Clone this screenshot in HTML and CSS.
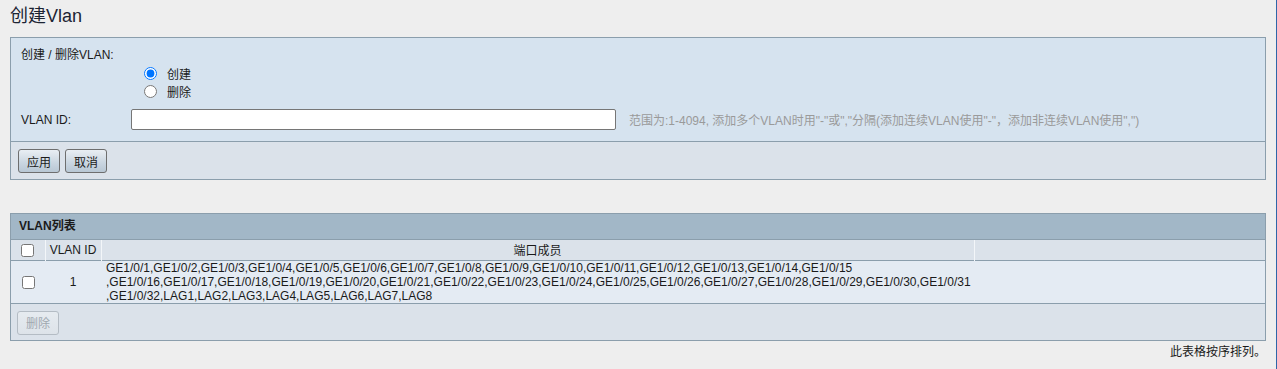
FILE: index.html
```html
<!DOCTYPE html>
<html lang="zh-CN">
<head>
<meta charset="utf-8">
<title>创建Vlan</title>
<link rel="stylesheet" href="styles.css">
</head>
<body>
<div class="page">
  <h1 class="title">创建Vlan</h1>

  <div class="panel">
    <div class="form">
      <div class="label-row">创建 / 删除VLAN:</div>
      <div class="radios">
        <label class="radio"><input type="radio" name="op" checked><span>创建</span></label>
        <label class="radio"><input type="radio" name="op"><span>删除</span></label>
      </div>
      <div class="id-row">
        <span class="id-label">VLAN ID:</span>
        <input class="id-input" type="text">
        <span class="hint">范围为:1-4094, 添加多个VLAN时用"-"或","分隔(添加连续VLAN使用"-"，添加非连续VLAN使用",")</span>
      </div>
    </div>
    <div class="footer">
      <button class="btn">应用</button>
      <button class="btn">取消</button>
    </div>
  </div>

  <div class="panel list">
    <div class="list-head">VLAN列表</div>
    <table class="grid">
      <colgroup>
        <col class="w-chk">
        <col class="w-id">
        <col class="w-mem">
        <col>
      </colgroup>
      <thead>
        <tr class="col-head">
          <th class="c-chk"><input type="checkbox"></th>
          <th class="c-id">VLAN ID</th>
          <th class="c-mem">端口成员</th>
          <th class="c-rest"></th>
        </tr>
      </thead>
      <tbody>
        <tr class="data">
          <td class="c-chk"><input type="checkbox"></td>
          <td class="c-id">1</td>
          <td class="c-mem mem">GE1/0/1,GE1/0/2,GE1/0/3,GE1/0/4,GE1/0/5,GE1/0/6,GE1/0/7,GE1/0/8,GE1/0/9,GE1/0/10,GE1/0/11,GE1/0/12,GE1/0/13,GE1/0/14,GE1/0/15<br>,GE1/0/16,GE1/0/17,GE1/0/18,GE1/0/19,GE1/0/20,GE1/0/21,GE1/0/22,GE1/0/23,GE1/0/24,GE1/0/25,GE1/0/26,GE1/0/27,GE1/0/28,GE1/0/29,GE1/0/30,GE1/0/31<br>,GE1/0/32,LAG1,LAG2,LAG3,LAG4,LAG5,LAG6,LAG7,LAG8</td>
          <td class="c-rest"></td>
        </tr>
      </tbody>
    </table>
    <div class="footer list-foot">
      <button class="btn" disabled>删除</button>
    </div>
  </div>

  <div class="note">此表格按序排列。</div>
</div>
</body>
</html>
```

FILE: styles.css
```css
html, body {
  margin: 0;
  padding: 0;
}
body {
  background: #eeeeee;
  font-family: "Liberation Sans", Arial, "Noto Sans CJK SC", sans-serif;
  font-size: 12px;
  color: #1a1a1a;
  min-height: 100vh;
  box-sizing: border-box;
  border-right: 1px solid #2f66a8;
}
.page {
  padding: 0 10px;
}
.title {
  margin: 0;
  padding-top: 5px;
  height: 32px;
  font-size: 18px;
  line-height: 22px;
  font-weight: normal;
  color: #1c2433;
}
.panel {
  border: 1px solid #8b9eac;
  background: #d6e3ef;
}
.form {
  padding: 10px;
  height: 83px;
}
.label-row {
  line-height: 14px;
}
.radios {
  margin-left: 123px;
  margin-top: 2px;
  display: flex;
  flex-direction: column;
}
.radio {
  display: flex;
  align-items: center;
  height: 18px;
}
.radio input {
  margin: 0;
  width: 13px;
  height: 13px;
}
.radio span {
  margin-left: 10px;
}
.id-row {
  display: flex;
  align-items: center;
  margin-top: 9px;
}
.id-label {
  width: 110px;
}
.id-input {
  box-sizing: border-box;
  width: 485px;
  height: 21px;
  margin: 0;
  border: 1px solid #767676;
  border-radius: 2px;
  background: #fff;
  padding: 0 3px;
}
.hint {
  margin-left: 13px;
  color: #9a9a9a;
}
.footer {
  border-top: 1px solid #8b9eac;
  background: #dbe2ea;
  padding: 7px 7px 6px 7px;
  display: flex;
  gap: 5px;
}
.btn {
  box-sizing: border-box;
  width: 42px;
  height: 24px;
  margin: 0;
  padding: 0;
  font-family: inherit;
  font-size: 12px;
  color: #1a1a1a;
  border: 1px solid #6e6e6e;
  border-radius: 3px;
  background: linear-gradient(#e9eef3, #c9d5e0 60%, #b8c7d4);
}
.btn:disabled {
  color: #a0a8b0;
  border-color: #b4bcc4;
  background: linear-gradient(#e6ebf0, #dde3e9);
}
.list {
  margin-top: 33px;
  background: #dbe2ea;
}
.list-head {
  height: 25px;
  line-height: 25px;
  padding-left: 8px;
  font-weight: bold;
  background: #a2b7c7;
  border-bottom: 1px solid #8b9eac;
}
.grid {
  width: 100%;
  border-collapse: collapse;
  table-layout: fixed;
}
.w-chk { width: 34px; }
.w-id { width: 56px; }
.w-mem { width: 873px; }
.grid th, .grid td {
  padding: 0;
  font-weight: normal;
}
.col-head {
  height: 20px;
  background: #dbe2ea;
}
.col-head th {
  border-left: 1px solid #f3f6f9;
}
.col-head th:first-child {
  border-left: none;
}
.data {
  background: #e4ebf3;
  border-top: 1px solid #8b9eac;
  border-bottom: 1px solid #8b9eac;
}
.c-chk {
  text-align: center;
}
.c-chk input {
  margin: 0;
  width: 13px;
  height: 13px;
  vertical-align: middle;
}
.c-id {
  text-align: center;
}
.mem {
  padding: 0 0 0 5px !important;
  line-height: 14px;
  text-align: left;
  white-space: nowrap;
}
.list-foot {
  border-top: none;
  padding: 7px 6px 5px 6px;
}
.note {
  text-align: right;
  padding: 4px 0 0 0;
  line-height: 14px;
}
```
